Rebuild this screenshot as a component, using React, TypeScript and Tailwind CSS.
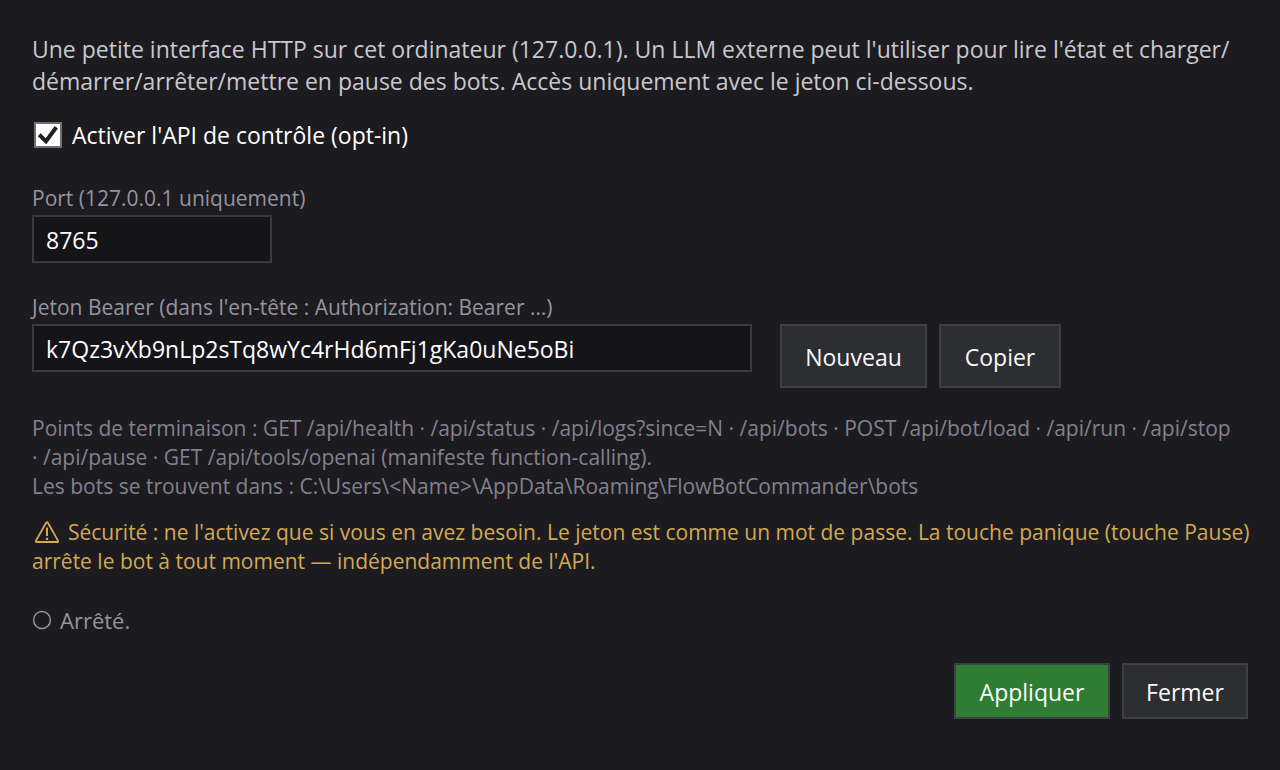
import { useState } from "react";
import type { ReactNode } from "react";

function Button({ children, primary = false, tall = false, className }: { children: ReactNode; primary?: boolean; tall?: boolean; className: string }) {
  return (
    <button
      type="button"
      className={`border-2 border-[#3f3f46] pt-0.5 text-[23px] leading-8 text-[#fafafa] ${primary ? "bg-[#2e7d32]" : "bg-[#2d2e32]"} ${tall ? "h-16" : "h-14"} ${className}`}
    >
      {children}
    </button>
  );
}

function WarningIcon() {
  return (
    <svg viewBox="0 0 26 24" className="mr-2 ml-0.5 inline-block h-6 w-[26px] align-[-4px]" fill="none" stroke="currentColor" aria-hidden="true">
      <path d="M12 3 Q13 1.4 14 3 L24 20.6 Q24.6 22 23.3 22 H2.7 Q1.4 22 2 20.6 Z" strokeWidth="1.8" strokeLinejoin="round" />
      <path d="M13 7.5 V16 M13 17.8 V20" strokeWidth="2" />
    </svg>
  );
}

export default function App() {
  const [enabled, setEnabled] = useState(true);
  const [port, setPort] = useState("8765");
  const [token, setToken] = useState("k7Qz3vXb9nLp2sTq8wYc4rHd6mFj1gKa0uNe5oBi");

  return (
    <main className="min-h-screen bg-[#1c1b1f] px-8 pt-[33px] pb-8 font-['Open_Sans','Segoe_UI',sans-serif] text-[21px] leading-[29px] text-[#9694a0]">
      <p className="text-[23px] leading-8 text-[#c9c8ce]">
        Une petite interface HTTP sur cet ordinateur (127.0.0.1). Un LLM externe peut l'utiliser pour lire l'état et charger/<wbr />
        démarrer/arrêter/mettre en pause des bots. Accès uniquement avec le jeton ci-dessous.
      </p>

      <label className="mt-[22px] ml-0.5 flex w-fit items-center gap-2.5 text-[23px] leading-8 text-white">
        <span className="grid h-[26px] w-7">
          <input
            type="checkbox"
            checked={enabled}
            onChange={(e) => setEnabled(e.target.checked)}
            className="peer col-start-1 row-start-1 h-[26px] w-7 appearance-none border-2 border-[#707070] bg-white"
          />
          <svg viewBox="0 0 28 26" className="pointer-events-none invisible col-start-1 row-start-1 h-[26px] w-7 peer-checked:visible" fill="none" stroke="#212121" strokeWidth="4" aria-hidden="true">
            <path d="M5.2 12.8 L12 19.2 L22.3 5.2" />
          </svg>
        </span>
        Activer l'API de contrôle (opt-in)
      </label>

      <div className="mt-[33px] flex flex-col items-start gap-0.5">
        <label htmlFor="port">Port (127.0.0.1 uniquement)</label>
        <input
          id="port"
          value={port}
          onChange={(e) => setPort(e.target.value)}
          className="h-12 w-60 border-2 border-[#3a3842] bg-[#151419] px-3 pt-0.5 text-[23px] leading-8 text-white"
        />
      </div>

      <div className="mt-[30px] flex flex-col gap-0.5">
        <label htmlFor="token">Jeton Bearer (dans l'en-tête : Authorization: Bearer …)</label>
        <div className="flex items-start gap-3">
          <input
            id="token"
            value={token}
            onChange={(e) => setToken(e.target.value)}
            className="mr-4 h-12 w-[720px] border-2 border-[#3a3842] bg-[#151419] px-3 pt-0.5 text-[23px] leading-8 text-white"
          />
          <Button tall className="w-[147px]">Nouveau</Button>
          <Button tall className="w-[122px]">Copier</Button>
        </div>
      </div>

      <p className="mt-[26px] text-[#83818d]">
        Points de terminaison : GET /api/health · /api/status · /api/logs?since=N · /api/bots · POST /api/bot/load · /api/run · /api/stop{" "}
        <span className="whitespace-nowrap">· /api/pause</span> · GET /api/tools/openai (manifeste function-calling).
        <br />
        Les bots se trouvent dans : C:\Users\&lt;Name&gt;\AppData\Roaming\FlowBotCommander\bots
      </p>

      <p className="-mr-4 mt-[17px] text-[#d4a953]">
        <WarningIcon />
        Sécurité : ne l'activez que si vous en avez besoin. Le jeton est comme un mot de passe. La touche panique (touche Pause) arrête le bot à tout moment — indépendamment de l'API.
      </p>

      <p role="status" className="mt-7 flex items-center gap-2 text-[22px] leading-8">
        <svg viewBox="0 0 20 20" className="size-5" fill="none" stroke="currentColor" strokeWidth="1.5" aria-hidden="true">
          <circle cx="10" cy="10" r="8.4" />
        </svg>
        Arrêté.
      </p>

      <div className="mt-[27px] flex justify-end gap-3">
        <Button primary className="w-[156px]">Appliquer</Button>
        <Button className="w-[126px]">Fermer</Button>
      </div>
    </main>
  );
}
